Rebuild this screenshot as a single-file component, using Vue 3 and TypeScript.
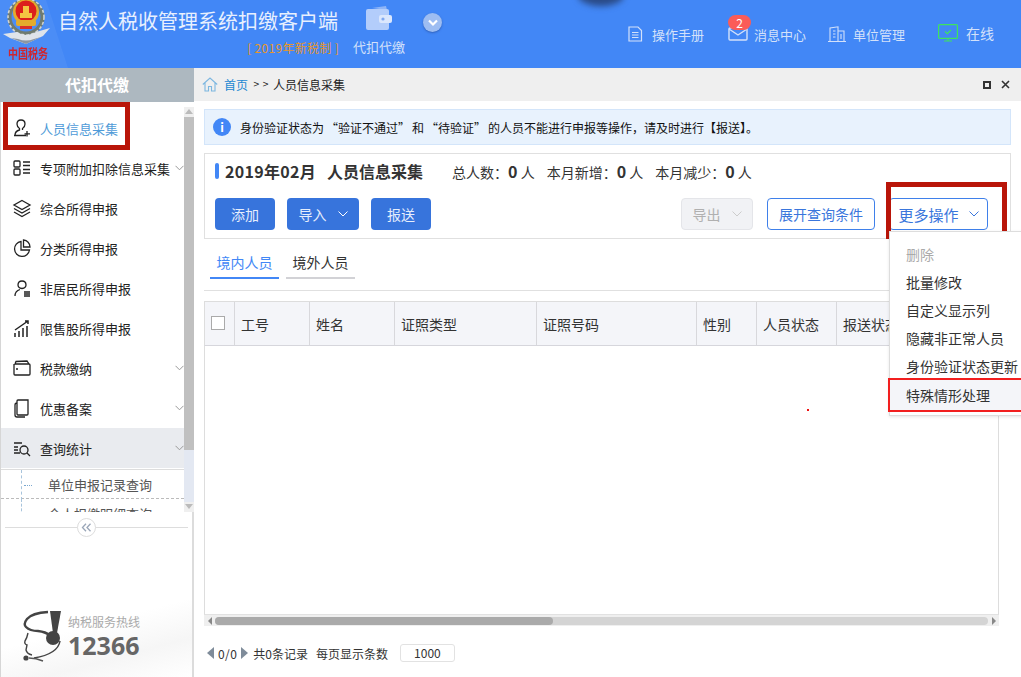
<template>
  <div class="client">
    <header class="topbar">
      <svg class="emblem" width="68" height="68" viewBox="0 0 68 68">
        <polygon points="0,0 46,0 68,68 0,68" fill="#fff" opacity="0.05" />
        <circle cx="26" cy="17" r="16.5" fill="none" stroke="#6f7b70" stroke-width="4" />
        <circle cx="26" cy="17" r="18" fill="none" stroke="#cfd3d2" stroke-width="1.6" stroke-dasharray="3 2" />
        <path d="M3 34 L17 32 Q26 38 36 32 L50 28 L43 36 L26 44 L10 38 Z" fill="#dfe4ea" />
        <path d="M11 38 L26 44 L41 37 L34 39 Q26 42 18 39 Z" fill="#8b96a2" />
        <circle cx="26" cy="12" r="13" fill="#e3ab2c" />
        <circle cx="26" cy="11" r="10.5" fill="#dc1f1c" />
        <rect x="16" y="20" width="20" height="6" rx="2" fill="#e3ab2c" />
        <rect x="20" y="13" width="12" height="5" fill="#f4c542" />
        <rect x="23" y="6" width="6" height="7" fill="#f4c542" />
        <rect x="20" y="26" width="12" height="3" fill="#d6302a" />
      </svg>
      <span class="brand-mark">中国税务</span>
      <div class="brand">
        <h1 class="brand-title">自然人税收管理系统扣缴客户端</h1>
        <span class="brand-sub">[ 2019年新税制 ]</span>
      </div>
      <div class="module">
        <svg width="26" height="26" viewBox="0 0 26 26">
          <path d="M6 3 L20 1 L21 5 Z" fill="#8fb5f7" />
          <rect x="0" y="4" width="23" height="21" rx="2" fill="#b3cdfb" />
          <rect x="13" y="10" width="13" height="8" rx="2" fill="#dbe7fd" />
          <circle cx="17" cy="14" r="1.6" fill="#7fa8f0" />
        </svg>
        <span>代扣代缴</span>
      </div>
      <span class="module-toggle">
        <svg width="10" height="8" viewBox="0 0 10 8"><path d="M1 1.5 L5 5.5 L9 1.5" fill="none" stroke="#fff" stroke-width="2.2" /></svg>
      </span>
      <div class="top-shadow"></div>
      <nav class="top-nav">
        <a class="top-link manual">
          <svg width="16" height="16" viewBox="0 0 16 16" fill="none" stroke="#d3e1fa" stroke-width="1.2"><path d="M2 1 H11 L14.5 4.5 V15 H2 Z M5 6.5 H11.5 M5 9 H11.5 M5 11.5 H11.5" /></svg>
          操作手册
        </a>
        <a class="top-link message">
          <span class="badge">2</span>
          <svg width="20" height="16" viewBox="0 0 20 16" fill="none" stroke="#d3e1fa" stroke-width="1.4"><rect x="1" y="2" width="18" height="12" rx="1" /><path d="M1 3 L10 9 L19 3" /></svg>
          消息中心
        </a>
        <a class="top-link unit">
          <svg width="18" height="16" viewBox="0 0 18 16" fill="none" stroke="#d3e1fa" stroke-width="1.1"><path d="M0 15.5 H18 M2 15.5 V2 L10 .8 V15.5 M10 5 H16 V15.5 M5 5 H7.5 M5 8 H7.5 M5 11 H7.5 M13 8 V13" /></svg>
          单位管理
        </a>
        <a class="top-link online">
          <svg width="20" height="18" viewBox="0 0 20 18" fill="none" stroke="#3fe35d" stroke-width="1.2"><rect x=".6" y=".6" width="18.8" height="13.8" rx="1" /><path d="M10 14.5 V17 M6 17 H14 M7 7.5 L9.3 9.6 L13 6" /></svg>
          在线
        </a>
      </nav>
    </header>

    <div class="main">
      <aside class="sidebar">
        <div class="side-title">代扣代缴</div>
        <div class="side-scroll">
          <i class="title-pointer"></i>
          <ul class="menu">
            <li v-for="item in menuItems" :key="item.label" class="menu-item" :class="{ current: item.current, open: item.open }">
              <svg class="menu-icon" width="20" height="20" viewBox="0 0 20 20" fill="none" stroke="#222" stroke-width="1.3" v-html="item.icon"></svg>
              <span>{{ item.label }}</span>
              <svg v-if="item.arrow" class="menu-arrow" width="9" height="6" viewBox="0 0 9 6"><path d="M.5 .8 L4.5 4.8 L8.5 .8" fill="none" stroke="#999" /></svg>
              <span v-if="item.marked" class="mark side-mark"></span>
            </li>
            <li class="sub-item"><i class="tree-dots"></i>单位申报记录查询</li>
            <li class="sub-item">个人扣缴明细查询</li>
          </ul>
          <div class="fake-scroll">
            <span class="scroll-up"></span>
            <span class="scroll-thumb"></span>
            <span class="scroll-down"></span>
          </div>
        </div>
        <div class="collapse-row">
          <span class="collapse-btn">
            <svg width="11" height="9" viewBox="0 0 11 9" fill="none" stroke="#9aa6b8" stroke-width="1.3"><path d="M5 .8 L1.5 4.5 L5 8.2 M9.5 .8 L6 4.5 L9.5 8.2" /></svg>
          </span>
        </div>
        <div class="hotline">
          <svg width="44" height="56" viewBox="0 0 44 56">
            <polygon points="28,3 39,3 35,25 31,25" fill="#444" />
            <circle cx="31" cy="30" r="7" fill="#444" />
            <path d="M26 4 Q10 5 5 11 Q1 16 4 19 Q8 23 16 23 Q24 24 27 27" fill="none" stroke="#444" stroke-width="2.4" />
            <path d="M6 25 Q5 30 3 33 Q2 36 5 37 L4 42 Q5 46 10 47" fill="none" stroke="#444" stroke-width="1.4" />
            <path d="M38 33 Q36 46 12 50" fill="none" stroke="#444" stroke-width="1.5" />
            <circle cx="4" cy="50" r="2.6" fill="#444" />
            <path d="M7 50 Q14 50 21 53" fill="none" stroke="#555" stroke-width="1.4" />
          </svg>
          <div class="hotline-text">
            <span class="hotline-label">纳税服务热线</span>
            <strong class="hotline-num">12366</strong>
          </div>
        </div>
      </aside>

      <section class="content">
        <div class="crumbs">
          <svg width="16" height="15" viewBox="0 0 16 15" fill="none" stroke="#7db7e0" stroke-width="1.1"><path d="M.8 7.5 L8 1 L15.2 7.5 M3 6 V14 H6.5 V9.5 H9.5 V14 H13 V6" /></svg>
          <a class="crumb-home">首页</a>
          <span class="crumb-sep">&gt; &gt;</span>
          <span>人员信息采集</span>
          <span class="win-btn win-max"></span>
          <svg class="win-close" width="9" height="9" viewBox="0 0 9 9"><path d="M1 1 L8 8 M8 1 L1 8" stroke="#333" stroke-width="1.6" /></svg>
        </div>

        <div class="panel">
          <div class="notice">
            <span class="notice-icon">i</span>
            <span>身份验证状态为<span class="quoted">“验证不通过”</span>和<span class="quoted">“待验证”</span>的人员不能进行申报等操作，请及时进行【报送】。</span>
          </div>

          <div class="card">
            <div class="card-head">
              <i class="head-bar"></i>
              <h2 class="head-title"><em>2019年02月</em><span>人员信息采集</span></h2>
              <div class="stats">
                <span v-for="s in stats" :key="s" class="stat">{{ s }}：<b>0</b> 人</span>
              </div>
            </div>
            <div class="toolbar">
              <button class="btn primary">添加</button>
              <button class="btn primary with-arrow">导入<svg width="10" height="6" viewBox="0 0 10 6"><path d="M.5 .5 L5 5 L9.5 .5" fill="none" stroke="#fff" /></svg></button>
              <button class="btn primary">报送</button>
              <button class="btn disabled with-arrow export">导出<svg width="10" height="6" viewBox="0 0 10 6"><path d="M.5 .5 L5 5 L9.5 .5" fill="none" stroke="#ccc" /></svg></button>
              <button class="btn outline query">展开查询条件</button>
              <div class="more-wrap">
                <button class="btn outline with-arrow more">更多操作<svg width="10" height="6" viewBox="0 0 10 6"><path d="M.5 .5 L5 5 L9.5 .5" fill="none" stroke="#3a76dc" /></svg></button>
                <span class="mark more-mark"></span>
                <ul class="more-menu">
                  <li class="off">删除</li>
                  <li v-for="op in moreOps" :key="op">{{ op }}</li>
                  <li class="flagged">特殊情形处理</li>
                </ul>
              </div>
            </div>
          </div>

          <div class="tabs">
            <span class="tab active">境内人员</span>
            <span class="tab">境外人员</span>
          </div>

          <div class="grid">
            <div class="grid-head">
              <div class="cell check-cell"><i class="check"></i></div>
              <div v-for="col in columns" :key="col.label" class="cell" :style="{ width: col.width + 'px' }">{{ col.label }}</div>
            </div>
            <div class="grid-body"><i class="speck"></i></div>
            <div class="hscroll">
              <i class="arrow-left"></i>
              <div class="hscroll-track"><span class="hscroll-thumb"></span></div>
              <i class="arrow-right"></i>
            </div>
          </div>

          <div class="pager">
            <i class="page-prev"></i>
            <span class="page-count">0/0</span>
            <i class="page-next"></i>
            <span>共0条记录</span>
            <span class="page-size-label">每页显示条数</span>
            <span class="page-size">1000</span>
            <span class="side-tab"></span>
          </div>
        </div>
      </section>
    </div>
  </div>
</template>

<script setup lang="ts">
interface MenuItem {
  label: string
  icon: string
  arrow?: boolean
  current?: boolean
  open?: boolean
  marked?: boolean
}

const menuItems: MenuItem[] = [
  {
    label: '人员信息采集',
    current: true,
    marked: true,
    icon: '<path d="M2 17.5 H14 M3 17.5 Q3 13 7.5 12 V10.5 Q5 9 5 6 Q5 2 9 2 Q13 2 13 6 Q13 9 10.5 10.5 V12 M15 13 V18.5 M12.5 15.8 H18" />'
  },
  {
    label: '专项附加扣除信息采集',
    arrow: true,
    icon: '<rect x="2" y="3" width="6" height="6" rx="1" /><rect x="2" y="11" width="6" height="6" rx="1" /><path d="M11 4 H18 M11 7.5 H18 M11 11.5 H18 M11 15 H18" />'
  },
  {
    label: '综合所得申报',
    icon: '<path d="M10 2.5 L18 7 L10 11.5 L2 7 Z M2 10.5 L10 15 L18 10.5 M2 14 L10 18.5 L18 14" />'
  },
  {
    label: '分类所得申报',
    icon: '<path d="M9 3.5 A7.5 7.5 0 1 0 17.5 12 H9 Z M11.5 2 A7 7 0 0 1 18 9 H11.5 Z" />'
  },
  {
    label: '非居民所得申报',
    icon: '<path d="M6 7 Q6 3 10 3 Q14 3 14 7 Q14 10 10 10.5 Q6 10 6 7 Z M3 18 Q3 13 8 11.5 M12 14 H18 M12 16 H18 M12 18 H18" />'
  },
  {
    label: '限售股所得申报',
    icon: '<path d="M3 12 L16 3 M13 3 H16 V6 M3 15 V19 M7 13 V19 M11 10 V19 M15 8 V19" stroke-width="1.5" />'
  },
  {
    label: '税款缴纳',
    arrow: true,
    icon: '<path d="M3 6 L4 3.5 L15 3 L17 6 M2.5 6 H17 Q18 6 18 7 V16 Q18 17 17 17 H3 Q2 17 2 16 V6 M4 11 H6" />'
  },
  {
    label: '优惠备案',
    arrow: true,
    icon: '<path d="M6 2 H16 V16 Q16 17 15 17 H6 Q5 17 5 16 V3 Q5 2 6 2 Z M5 5 Q3 5 3 7 V17 Q3 19 5 19 H13" />'
  },
  {
    label: '查询统计',
    arrow: true,
    open: true,
    icon: '<path d="M2 5 H10 M2 9 H6 M2 12 H6 M2 15 H8" /><circle cx="12" cy="12" r="4" /><path d="M15 15 L18 18" />'
  }
]

const stats: string[] = ['总人数', '本月新增', '本月减少']

const moreOps: string[] = ['批量修改', '自定义显示列', '隐藏非正常人员', '身份验证状态更新']

const columns = [
  { label: '工号', width: 75 },
  { label: '姓名', width: 85 },
  { label: '证照类型', width: 142 },
  { label: '证照号码', width: 160 },
  { label: '性别', width: 60 },
  { label: '人员状态', width: 80 },
  { label: '报送状态', width: 132 }
]
</script>

<style>
html,
body {
  margin: 0;
  overflow: hidden;
  background: #fff;
}
</style>

<style scoped>
* {
  box-sizing: border-box;
}

.client {
  width: 1021px;
  height: 677px;
  display: flex;
  flex-direction: column;
  overflow: hidden;
  font-family: "Noto Sans CJK SC", "Liberation Sans", sans-serif;
  font-size: 13px;
  color: #333;
}

/* Top bar */
.topbar {
  position: relative;
  height: 68px;
  flex: none;
  display: flex;
  background: #4287f6;
  color: #d3e1fa;
}

.emblem {
  flex: none;
  display: block;
}

.brand-mark {
  position: absolute;
  left: 8px;
  top: 46px;
  font-size: 10px;
  line-height: 14px;
  font-weight: 700;
  color: #cf2630;
  transform: scaleY(1.3);
}

.brand {
  margin-left: -10px;
  width: 281px;
  display: flex;
  flex-direction: column;
  align-items: flex-end;
}

.brand-title {
  margin: 7px 0 0 -1px;
  width: 100%;
  font-size: 20px;
  line-height: 27px;
  font-weight: 400;
  color: #e8f0fe;
}

.brand-sub {
  margin-top: 5px;
  font-size: 12px;
  line-height: 17px;
  letter-spacing: 0.3px;
  color: #e6962c;
}

.module {
  margin-left: 14px;
  width: 52px;
  padding-top: 5px;
  display: flex;
  flex-direction: column;
  align-items: center;
  gap: 7px;
  line-height: 18px;
  white-space: nowrap;
}

.module-toggle {
  margin: 13px 0 0 18px;
  width: 19px;
  height: 19px;
  display: flex;
  align-items: center;
  justify-content: center;
  border-radius: 50%;
  background: #9dbdf2;
  box-shadow: 0 1px 2px rgba(30, 60, 130, 0.5);
}

.top-shadow {
  position: absolute;
  left: 578px;
  top: -16px;
  width: 46px;
  height: 22px;
  border-radius: 50%;
  background: #2a4a86;
  filter: blur(3px);
}

.top-nav {
  margin-left: auto;
  padding: 24px 27px 0 0;
  display: flex;
  align-items: flex-start;
  gap: 24px;
}

.top-link {
  position: relative;
  display: flex;
  align-items: center;
  gap: 9px;
  height: 20px;
  white-space: nowrap;
}

.message {
  gap: 6px;
}

.unit {
  margin-left: -2px;
  gap: 7px;
}

.online {
  margin-left: 9px;
  gap: 8px;
  font-size: 14px;
  top: -1px;
}

.badge {
  position: absolute;
  left: 0;
  top: -9px;
  width: 23px;
  height: 15px;
  border-radius: 8px;
  background: #fb5c58;
  color: #fff;
  font-size: 12px;
  line-height: 15px;
  text-align: center;
}

/* Sidebar */
.main {
  flex: 1;
  min-height: 0;
  display: flex;
}

.sidebar {
  position: relative;
  width: 194px;
  flex: none;
  display: flex;
  flex-direction: column;
  border-left: 1px solid #d6d6d6;
  border-right: 2px solid #dcdcdc;
  background: linear-gradient(165deg, #fff 88%, #f6f6f6 94%, #fff 100%);
}

.side-title {
  margin: 0 -2px 0 -1px;
  height: 34px;
  flex: none;
  background: #adb8c0;
  color: #fff;
  font-size: 16px;
  font-weight: 700;
  line-height: 33px;
  text-align: center;
}

.side-scroll {
  position: relative;
  height: 410px;
  flex: none;
  margin-right: -2px;
  overflow: hidden;
  background: #fff;
}

.title-pointer {
  position: absolute;
  left: 91px;
  top: 0;
  border-left: 4px solid transparent;
  border-right: 4px solid transparent;
  border-top: 4px solid #adb8c0;
}

.menu {
  margin: 0;
  width: 183px;
  padding: 6px 0 0;
  list-style: none;
}

.menu-item {
  position: relative;
  height: 40px;
  padding-left: 11px;
  display: flex;
  align-items: center;
  white-space: nowrap;
  color: #222;
}

.menu-icon {
  flex: none;
  margin-right: 8px;
}

.menu-arrow {
  position: absolute;
  right: 0;
  top: 17px;
}

.menu-item.current {
  color: #4f9bd8;
}

.menu-item.open {
  background: #e9ebef;
}

.sub-item {
  position: relative;
  height: 30px;
  margin-top: 1px;
  padding-left: 47px;
  line-height: 30px;
  color: #555;
  border-top: 1px solid #ddd;
  border-bottom: 1px dashed #bbb;
  white-space: nowrap;
}

.sub-item::before {
  content: "";
  position: absolute;
  left: 20px;
  top: 0;
  bottom: -2px;
  border-left: 1px dashed #a8c4dc;
}

.sub-item + .sub-item {
  border-top: 0;
  margin-top: 0;
}

.tree-dots {
  position: absolute;
  left: 23px;
  top: 15px;
  width: 8px;
  border-top: 1px dotted #7aa8d0;
}

.fake-scroll {
  position: absolute;
  right: 0;
  top: 5px;
  bottom: 0;
  width: 10px;
  display: flex;
  flex-direction: column;
  background: #e3e8f2;
}

.scroll-up,
.scroll-down {
  height: 10px;
  flex: none;
  background: #efefef;
}

.scroll-up::after,
.scroll-down::after {
  content: "";
  display: block;
  margin: 2px auto 0;
  width: 0;
  border-left: 4px solid transparent;
  border-right: 4px solid transparent;
}

.scroll-up::after {
  border-bottom: 5px solid #bbb;
}

.scroll-down {
  margin-top: auto;
}

.scroll-down::after {
  border-top: 5px solid #bbb;
}

.scroll-thumb {
  height: 333px;
  flex: none;
  background: #c0c0c0;
}

.collapse-row {
  position: relative;
  height: 33px;
  flex: none;
  display: flex;
  justify-content: center;
  padding-right: 21px;
  background: #fff;
}

.collapse-row::before {
  content: "";
  position: absolute;
  left: 4px;
  right: 4px;
  top: 15px;
  border-top: 1px solid #ddd;
}

.collapse-btn {
  position: relative;
  margin-top: 6px;
  width: 19px;
  height: 19px;
  display: flex;
  align-items: center;
  justify-content: center;
  border: 1px solid #ddd;
  border-radius: 50%;
  background: #fff;
}

.hotline {
  margin-top: auto;
  padding: 0 0 13px 21px;
  display: flex;
  align-items: flex-end;
  gap: 2px;
}

.hotline svg {
  flex: none;
}

.hotline-text {
  display: flex;
  flex-direction: column;
  padding-bottom: 4px;
}

.hotline-label {
  font-size: 12px;
  line-height: 17px;
  color: #aaa;
}

.hotline-num {
  font-family: "Open Sans", sans-serif;
  font-size: 25px;
  line-height: 30px;
  font-weight: 700;
  color: #666;
}

/* Content */
.content {
  flex: 1;
  min-width: 0;
  display: flex;
  flex-direction: column;
}

.crumbs {
  height: 33px;
  flex: none;
  padding-left: 8px;
  display: flex;
  align-items: center;
  background: #efefef;
  font-size: 12px;
  color: #222;
}

.crumb-home {
  margin-left: 6px;
  color: #1c88d2;
}

.crumb-sep {
  margin: 0 4px 0 5px;
  font-family: "DejaVu Sans", sans-serif;
  font-size: 8px;
}

.win-btn {
  margin-left: auto;
}

.win-max {
  width: 8px;
  height: 8px;
  border: 2px solid #333;
}

.win-close {
  margin: 0 11px 0 10px;
}

.panel {
  flex: 1;
  min-height: 0;
  padding: 8px 10px 0;
  display: flex;
  flex-direction: column;
}

.notice {
  height: 36px;
  flex: none;
  padding-left: 8px;
  display: flex;
  align-items: center;
  gap: 9px;
  background: #e8f2fd;
  border: 1px solid #d3e5fa;
  font-size: 12px;
  color: #111;
  white-space: nowrap;
}

.quoted {
  margin: 0 2px;
}

.notice-icon {
  width: 18px;
  height: 18px;
  flex: none;
  border-radius: 50%;
  background: #4287f6;
  color: #fff;
  font-size: 12px;
  font-weight: 700;
  line-height: 18px;
  text-align: center;
}

.card {
  margin-top: 8px;
  height: 86px;
  flex: none;
  padding: 8px 10px 0;
  border: 1px solid #e0e0e0;
}

.card-head {
  height: 18px;
  display: flex;
  align-items: center;
}

.head-bar {
  width: 4px;
  height: 16px;
  flex: none;
  border-radius: 2px;
  background: #4287f6;
}

.head-title {
  margin: 0 0 0 6px;
  font-size: 16px;
  line-height: 18px;
  font-weight: 700;
  color: #333;
  white-space: nowrap;
}

.head-title em {
  font-style: normal;
  letter-spacing: 0.3px;
}

.head-title span {
  margin-left: 11px;
}

.stats {
  margin-left: 29px;
  display: flex;
  gap: 12px;
}

.stat {
  white-space: nowrap;
  font-size: 14px;
  line-height: 18px;
}

.stat b {
  font-size: 16px;
}

.toolbar {
  margin-top: 18px;
  display: flex;
  align-items: flex-start;
}

.btn {
  height: 32px;
  padding: 0;
  display: flex;
  align-items: center;
  justify-content: center;
  border: 1px solid transparent;
  border-radius: 4px;
  font-family: inherit;
  font-size: 14px;
  background: #fff;
}

.primary {
  width: 60px;
  margin-right: 12px;
  background: #3774dc;
  color: #e6eefc;
}

.with-arrow {
  width: 72px;
  gap: 11px;
}

.disabled {
  background: #f1f2f5;
  border-color: #e4e5e9;
  color: #b0b0b0;
}

.export {
  margin-left: 238px;
}

.outline {
  border-color: #3f80ea;
  color: #3a76dc;
}

.query {
  margin-left: 14px;
  width: 108px;
}

.more-wrap {
  position: relative;
  margin-left: 14px;
}

.more {
  width: 99px;
  gap: 10px;
  font-size: 15px;
}

.mark {
  position: absolute;
  border: 5px solid #b91509;
  pointer-events: none;
}

.more-mark {
  left: -3px;
  top: -16px;
  width: 121px;
  height: 57px;
}

.side-mark {
  left: 2px;
  top: -6px;
  width: 127px;
  height: 48px;
}

.more-menu {
  position: absolute;
  left: 0;
  top: 33px;
  width: 140px;
  margin: 0;
  padding: 8px 0 3px;
  list-style: none;
  font-size: 14px;
  background: #fff;
  border: 1px solid #ddd;
  box-shadow: 0 1px 3px rgba(0, 0, 0, 0.1);
  z-index: 2;
}

.more-menu li {
  height: 28px;
  padding-left: 16px;
  line-height: 28px;
  white-space: nowrap;
  color: #333;
}

.more-menu li.off {
  color: #aaa;
}

.more-menu li.flagged {
  margin: -2px 0 0 -2px;
  height: 34px;
  padding-left: 16px;
  line-height: 30px;
  background: #f4f5f9;
  border: 2px solid #f21f1f;
}

.tabs {
  height: 52px;
  flex: none;
  padding: 11px 0 0 6px;
  display: flex;
  gap: 7px;
  font-size: 14px;
  border-bottom: 1px solid #e0e0e0;
}

.tab {
  width: 69px;
  height: 29px;
  line-height: 25px;
  text-align: center;
  border-bottom: 2px solid #d2d2d6;
}

.tab.active {
  color: #4287f6;
  border-bottom-color: #4287f6;
}

.grid {
  margin-top: 10px;
  width: 795px;
  height: 325px;
  flex: none;
  display: flex;
  flex-direction: column;
}

.grid-head {
  height: 45px;
  flex: none;
  display: flex;
  font-size: 14px;
  background: #f4f5f9;
  border-top: 1px solid #ddd;
  border-bottom: 1px solid #d6d6dc;
  border-left: 1px solid #ddd;
}

.cell {
  flex: none;
  padding-left: 6px;
  line-height: 44px;
  border-right: 1px solid #d8d8dc;
  white-space: nowrap;
  overflow: hidden;
}

.check-cell {
  width: 30px;
  padding: 14px 0 0 6px;
}

.check {
  display: block;
  width: 14px;
  height: 14px;
  border: 1px solid #aaa;
  background: #fff;
}

.grid-body {
  position: relative;
  flex: 1;
  border-left: 1px solid #ddd;
  border-right: 1px solid #ddd;
  border-bottom: 1px solid #e2e2e2;
}

.speck {
  position: absolute;
  left: 602px;
  top: 63px;
  width: 2px;
  height: 2px;
  background: #e11;
}

.hscroll {
  height: 11px;
  flex: none;
  display: flex;
  align-items: center;
  background: #efefef;
}

.hscroll-track {
  flex: 1;
  height: 8px;
  border-radius: 4px;
  background: #d4d4d4;
}

.hscroll-thumb {
  display: block;
  width: 338px;
  height: 8px;
  border-radius: 4px;
  background: #aaa;
}

.arrow-left,
.arrow-right {
  width: 11px;
  flex: none;
  display: flex;
  justify-content: center;
}

.arrow-left::after {
  content: "";
  border-top: 4px solid transparent;
  border-bottom: 4px solid transparent;
  border-right: 4px solid #888;
}

.arrow-right::after {
  content: "";
  border-top: 4px solid transparent;
  border-bottom: 4px solid transparent;
  border-left: 4px solid #888;
}

.pager {
  height: 30px;
  margin-top: 12px;
  flex: none;
  display: flex;
  align-items: center;
  padding-left: 3px;
  font-size: 12px;
  color: #333;
}

.page-count {
  letter-spacing: 0.4px;
}

.page-prev {
  margin-right: 4px;
  border-top: 6px solid transparent;
  border-bottom: 6px solid transparent;
  border-right: 7px solid #7f8c9a;
}

.page-next {
  margin: 0 5px 0 4px;
  border-top: 6px solid transparent;
  border-bottom: 6px solid transparent;
  border-left: 7px solid #7f8c9a;
}

.page-size-label {
  margin-left: 8px;
}

.page-size {
  margin-left: 12px;
  width: 55px;
  height: 18px;
  border: 1px solid #e2e2e2;
  border-radius: 3px;
  line-height: 16px;
  text-align: center;
}

.side-tab {
  margin-left: auto;
  margin-right: -40px;
  width: 30px;
  height: 30px;
  border: 1px solid #f97316;
  border-radius: 3px;
}
</style>
